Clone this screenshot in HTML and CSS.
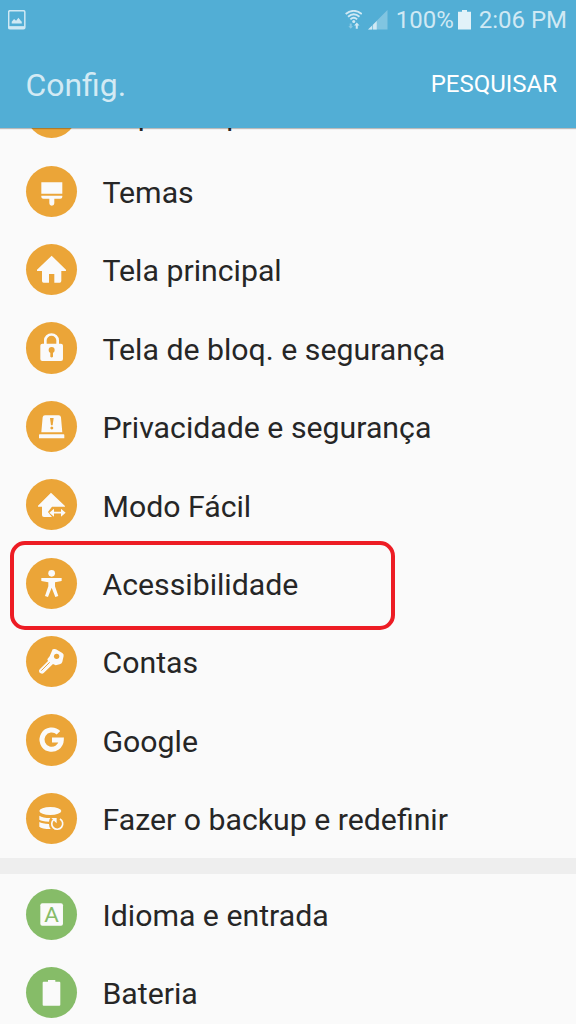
FILE: index.html
```html
<!DOCTYPE html>
<html lang="pt-BR">
<head>
<meta charset="utf-8">
<title>Config.</title>
<link rel="stylesheet" href="styles.css">
</head>
<body>
<div class="screen">
  <header class="header">
    <div class="status">
      <svg class="status-picture" viewBox="0 0 52 58"><rect x="2" y="2" width="48" height="54" rx="4" fill="none" stroke="currentColor" stroke-width="4.5"/><path d="M3 48h46v7H3z" fill="currentColor"/><path d="M11 40v-5l7-8 6 5 7-9 7 9 3 3v5z" fill="currentColor"/></svg>
      <svg class="status-wifi" viewBox="0 0 52 58"><g fill="none" stroke="currentColor" stroke-width="5.500"><path d="M2 12Q26-7 50 12M9 20Q26 5 43 20M16 28Q26 18 36 28"/></g><circle cx="26" cy="34" r="4.5" fill="currentColor"/><path d="M35 37l8 9h-5v10h-6V46h-5z" fill="currentColor"/><path d="M17 56l-7-8h4v-8h6v8h4z" fill="currentColor" opacity=".45"/></svg>
      <svg class="status-signal" viewBox="0 0 58 58"><path d="M0 58L58 0v58z" fill="currentColor" opacity=".38"/><path d="M0 58l12-11v11zM15 58V44l11-11v25z" fill="currentColor"/></svg>
      <span class="status-percent">100%</span>
      <svg class="status-battery" viewBox="0 0 39 58"><path d="M0 5h12V0h15v5h12v53H0z" fill="currentColor"/></svg>
      <span class="status-time">2:06 PM</span>
    </div>
    <div class="toolbar">
      <h1 class="title">Config.</h1>
      <span class="search">PESQUISAR</span>
    </div>
  </header>
  <main class="content">
    <ul class="list list-device">
      <li class="row"><span class="badge"></span><span class="label">Papel de parede</span></li>
      <li class="row"><svg class="badge" viewBox="0 0 154 154"><path d="M46 49h63v34H46zM46 89h63v4q0 5-6 5H85v14q0 7-7.500 7T70 112V98H52q-6 0-6-5z"/></svg><span class="label">Temas</span></li>
      <li class="row"><svg class="badge" viewBox="0 0 154 154"><path d="M77 35l43 42v4h-14v30q0 5-5 5H85V90H69v26H53q-5 0-5-5V81H33v-4z"/></svg><span class="label">Tela principal</span></li>
      <li class="row"><svg class="badge" viewBox="0 0 154 154"><path class="line" stroke-width="8" d="M58 66V55a18 17 0 0 1 37 0v11"/><rect x="43" y="65" width="68" height="52" rx="6"/><circle class="cut" cx="77" cy="84" r="9"/><path class="cut" d="M73 88h8v16q-4 5-8 0z"/></svg><span class="label">Tela de bloq. e segurança</span></li>
      <li class="row"><svg class="badge" viewBox="0 0 154 154"><path d="M57 43h41q6 0 7 6l4 45H46l4-45q1-6 7-6zM41 100h72q2 0 2 3v9H39v-9q0-3 2-3z"/><path class="cut" d="M72 51h11l-3 22h-5z"/><circle class="cut" cx="77.500" cy="81" r="4.500"/></svg><span class="label">Privacidade e segurança</span></li>
      <li class="row"><svg class="badge" viewBox="0 0 154 154"><path d="M75 41l42 40v2H78L66 99l12 15H54q-6 0-6-6V83H36v-3z"/><path class="line" stroke-width="5" d="M80 101h30"/><path d="M70 101l14-12v24zM119 101l-14-12v24z"/></svg><span class="label">Modo Fácil</span></li>
      <li class="row marked"><svg class="badge" viewBox="0 0 154 154"><circle cx="77" cy="46" r="10"/><path d="M46 60h61v9l-20 4v12l10 29-9 3-11-28-11 28-9-3 10-29V73l-21-4z"/></svg><span class="label">Acessibilidade</span></li>
      <li class="row"><svg class="badge" viewBox="0 0 154 154"><path d="M80 40q5-2 10 0l19 11q5 3 4 9l-4 18q-2 6-8 7l-12 3-8-4-28 27q-4 4-9 1-5-2-5-7 0-3 3-6l24-24-2-5 7-9z"/><circle class="cut" cx="92" cy="61" r="8"/><path class="line cut-line" stroke-width="3" d="M71 79L46 104"/></svg><span class="label">Contas</span></li>
      <li class="row"><svg class="badge" viewBox="0 0 154 154"><path class="line" stroke-width="15" d="M97.500 56.500A29 29 0 1 0 106 78H78"/></svg><span class="label">Google</span></li>
      <li class="row"><svg class="badge" viewBox="0 0 154 154"><ellipse cx="73" cy="54" rx="33" ry="12"/><path d="M40 68q10 7 33 7-3 4-4 11-22-1-29-6zM40 87q8 5 29 6 0 8 5 15-27 0-34-7z"/><path class="line" stroke-width="5" d="M84 79A16.500 16.500 0 1 0 102 78"/><path d="M76 75h16v16l-5-5-5-6z"/></svg><span class="label">Fazer o backup e redefinir</span></li>
    </ul>
    <ul class="list list-system">
      <li class="row"><svg class="badge" viewBox="0 0 154 154"><rect x="43" y="43" width="68" height="67" rx="6"/><text class="letter" x="77" y="98" text-anchor="middle" textLength="44" lengthAdjust="spacingAndGlyphs">A</text></svg><span class="label">Idioma e entrada</span></li>
      <li class="row"><svg class="badge" viewBox="0 0 154 154"><path d="M53 44h13v-5h22v5h12q3 0 3 3v66q0 3-3 3H53q-3 0-3-3V47q0-3 3-3z"/></svg><span class="label">Bateria</span></li>
    </ul>
  </main>
</div>
</body>
</html>
```
FILE: styles.css
```css
*, *::after { box-sizing: border-box; }
body { margin: 0; font-family: Roboto, sans-serif; }
.screen { width: 576px; height: 1024px; overflow: hidden; display: flex; flex-direction: column; background: #fafafa; }
.header { position: relative; z-index: 1; flex: none; height: 128px; background: #52aed5; box-shadow: 0 1px 1px rgba(0,0,0,.25); }
.status { display: flex; align-items: center; height: 40px; padding: 0 9px 0 8px; color: #d0e9f4; font-size: 24px; line-height: 40px; }
.status svg { flex: none; }
.status-picture { width: 17.500px; height: 19.500px; margin-right: auto; }
.status-wifi { width: 17.500px; height: 19.500px; margin-right: 6px; }
.status-signal { width: 19.500px; height: 19.500px; margin-right: 8px; }
.status-percent { width: 62px; white-space: nowrap; }
.status-battery { width: 13px; height: 19.500px; margin-right: 8px; color: #e2f2f9; }
.status-time { white-space: nowrap; }
.toolbar { display: flex; align-items: center; justify-content: space-between; height: 88px; padding: 0 19px 0 25.500px; }
.title { margin: 0; padding-top: 1px; font-size: 31.900px; font-weight: 400; color: #d3eaf4; }
.search { font-size: 24px; color: #fff; }
.content { flex: 1; min-height: 0; }
.list { list-style: none; margin: 0; padding: 0; }
.list-device { margin-top: -54.400px; --tone: #eba538; }
.list-system { border-top: 16px solid #eee; padding-top: 1.600px; --tone: #86bc68; }
.row { position: relative; display: flex; align-items: center; gap: 25.600px; height: 78.400px; padding-left: 25.600px; }
.badge { flex: none; width: 51.300px; height: 51.300px; border-radius: 50%; background: var(--tone); fill: #fafafa; }
.line { fill: none; stroke: #fafafa; }
.cut { fill: var(--tone); }
.cut-line { stroke: var(--tone); }
.letter { fill: var(--tone); font-size: 60px; }
.label { padding-top: 3.600px; font-size: 30.250px; line-height: 36px; color: #262626; white-space: nowrap; }
.marked::after { content: ""; position: absolute; left: 10px; top: -3px; width: 385px; height: 89px; border: 4px solid #ed1c24; border-radius: 15px; }
```
